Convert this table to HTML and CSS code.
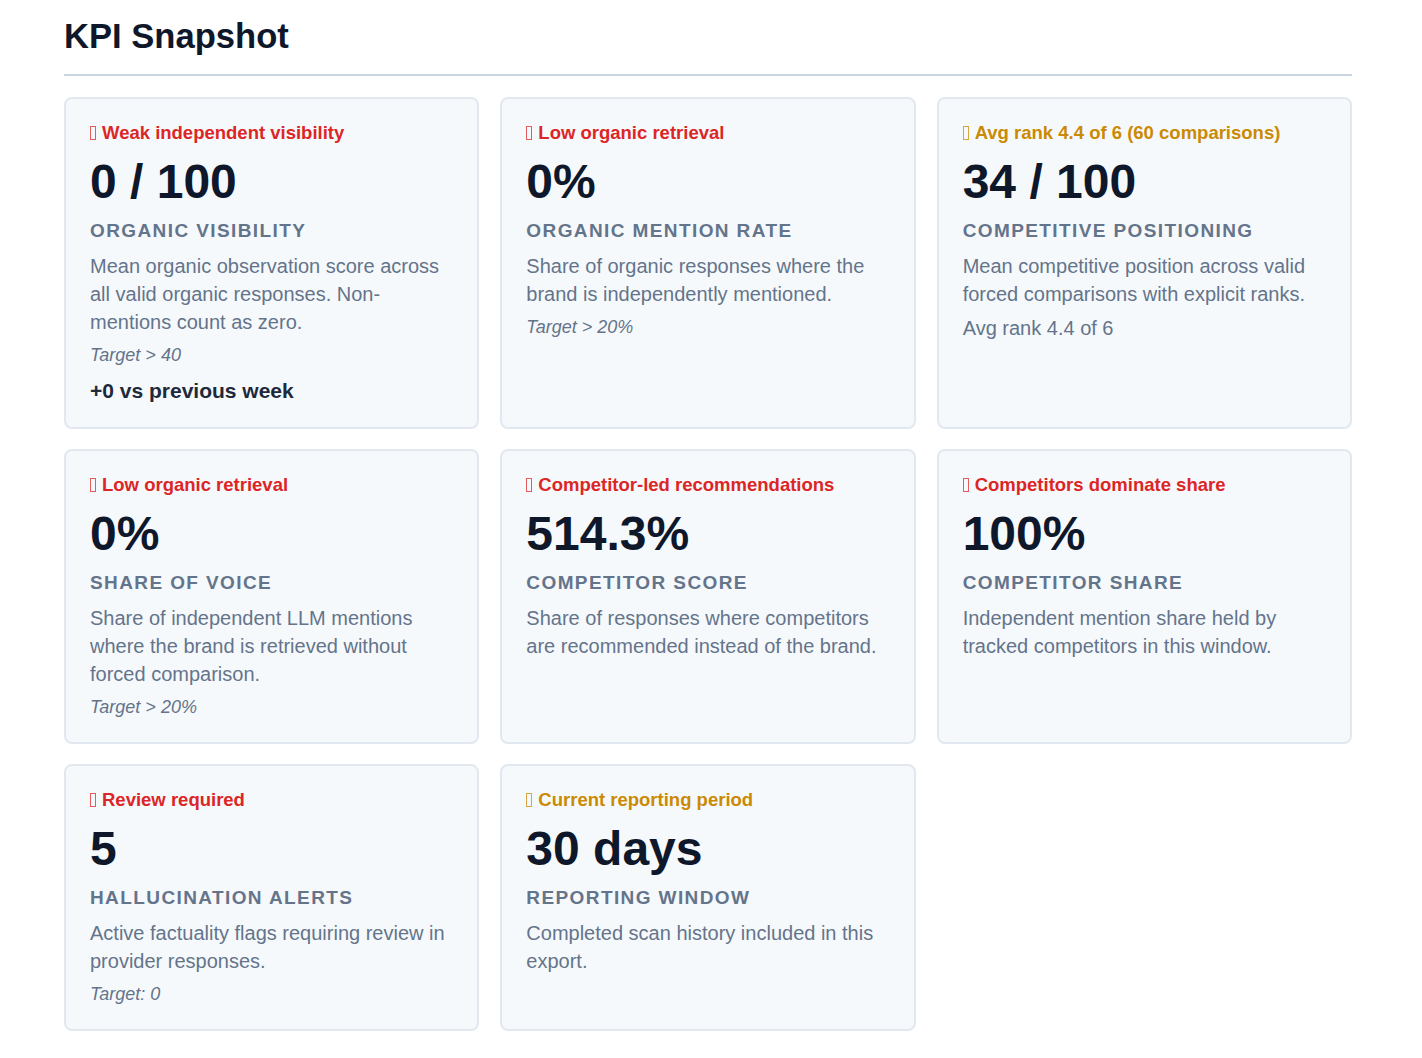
FILE: index.html
```html
<!DOCTYPE html>
<html lang="en">
<head>
<meta charset="utf-8">
<title>KPI Snapshot</title>
<link rel="stylesheet" href="styles.css">
</head>
<body>
<main class="page">
  <h1 class="title">KPI Snapshot</h1>
  <section class="grid">
    <article class="card">
      <div class="status status-red"><span class="tofu"></span>Weak independent visibility</div>
      <div class="value">0 / 100</div>
      <div class="label">Organic Visibility</div>
      <p class="desc">Mean organic observation score across all valid organic responses. Non-mentions count as zero.</p>
      <div class="target">Target &gt; 40</div>
      <div class="delta">+0 vs previous week</div>
    </article>
    <article class="card">
      <div class="status status-red"><span class="tofu"></span>Low organic retrieval</div>
      <div class="value">0%</div>
      <div class="label">Organic Mention Rate</div>
      <p class="desc">Share of organic responses where the brand is independently mentioned.</p>
      <div class="target">Target &gt; 20%</div>
    </article>
    <article class="card">
      <div class="status status-amber"><span class="tofu"></span>Avg rank 4.4 of 6 (60 comparisons)</div>
      <div class="value">34 / 100</div>
      <div class="label">Competitive Positioning</div>
      <p class="desc">Mean competitive position across valid forced comparisons with explicit ranks.</p>
      <div class="extra">Avg rank 4.4 of 6</div>
    </article>
    <article class="card">
      <div class="status status-red"><span class="tofu"></span>Low organic retrieval</div>
      <div class="value">0%</div>
      <div class="label">Share of Voice</div>
      <p class="desc">Share of independent LLM mentions where the brand is retrieved without forced comparison.</p>
      <div class="target">Target &gt; 20%</div>
    </article>
    <article class="card">
      <div class="status status-red"><span class="tofu"></span>Competitor-led recommendations</div>
      <div class="value">514.3%</div>
      <div class="label">Competitor Score</div>
      <p class="desc">Share of responses where competitors are recommended instead of the brand.</p>
    </article>
    <article class="card">
      <div class="status status-red"><span class="tofu"></span>Competitors dominate share</div>
      <div class="value">100%</div>
      <div class="label">Competitor Share</div>
      <p class="desc">Independent mention share held by tracked competitors in this window.</p>
    </article>
    <article class="card">
      <div class="status status-red"><span class="tofu"></span>Review required</div>
      <div class="value">5</div>
      <div class="label">Hallucination Alerts</div>
      <p class="desc">Active factuality flags requiring review in provider responses.</p>
      <div class="target">Target: 0</div>
    </article>
    <article class="card">
      <div class="status status-amber"><span class="tofu"></span>Current reporting period</div>
      <div class="value">30 days</div>
      <div class="label">Reporting Window</div>
      <p class="desc">Completed scan history included in this export.</p>
    </article>
  </section>
</main>
</body>
</html>
```
FILE: styles.css
```css
* {
  box-sizing: border-box;
}

html, body {
  margin: 0;
  padding: 0;
  background: #ffffff;
}

body {
  font-family: "Liberation Sans", Arial, Helvetica, sans-serif;
  color: #0f172a;
}

.page {
  width: 1288px;
  margin: 0 0 0 64px;
  padding-top: 15px;
}

.title {
  margin: 0;
  font-size: 34.6px;
  line-height: 42px;
  font-weight: 700;
  color: #0f172a;
  padding-bottom: 17px;
  border-bottom: 2px solid #cbd5e1;
}

.grid {
  margin-top: 21px;
  display: grid;
  grid-template-columns: repeat(3, 1fr);
  column-gap: 21px;
  row-gap: 20px;
}

.card {
  background: #f6f9fb;
  border: 2px solid #e2e8f0;
  border-radius: 8px;
  padding: 24px 24px 24px;
}

.status {
  font-size: 18.5px;
  line-height: 20px;
  font-weight: 700;
  display: flex;
  align-items: center;
}

.status-red {
  color: #dc2626;
}

.status-amber {
  color: #ca8a04;
}

.tofu {
  display: inline-block;
  width: 6px;
  height: 14px;
  border: 1px solid currentColor;
  opacity: 0.75;
  margin-right: 6px;
  flex: none;
}

.value {
  margin-top: 10px;
  font-size: 48px;
  line-height: 57px;
  font-weight: 700;
  color: #0f172a;
}

.label {
  margin-top: 10px;
  font-size: 19px;
  line-height: 22px;
  font-weight: 700;
  letter-spacing: 1.4px;
  text-transform: uppercase;
  color: #64748b;
}

.desc {
  margin: 10px 0 0;
  font-size: 20px;
  line-height: 28px;
  color: #64748b;
}

.target {
  margin-top: 8px;
  font-size: 18px;
  line-height: 22px;
  font-style: italic;
  color: #64748b;
}

.extra {
  margin-top: 6px;
  font-size: 20px;
  line-height: 28px;
  color: #64748b;
}

.delta {
  margin-top: 13px;
  font-size: 21px;
  line-height: 24px;
  font-weight: 700;
  color: #1e293b;
}
```
